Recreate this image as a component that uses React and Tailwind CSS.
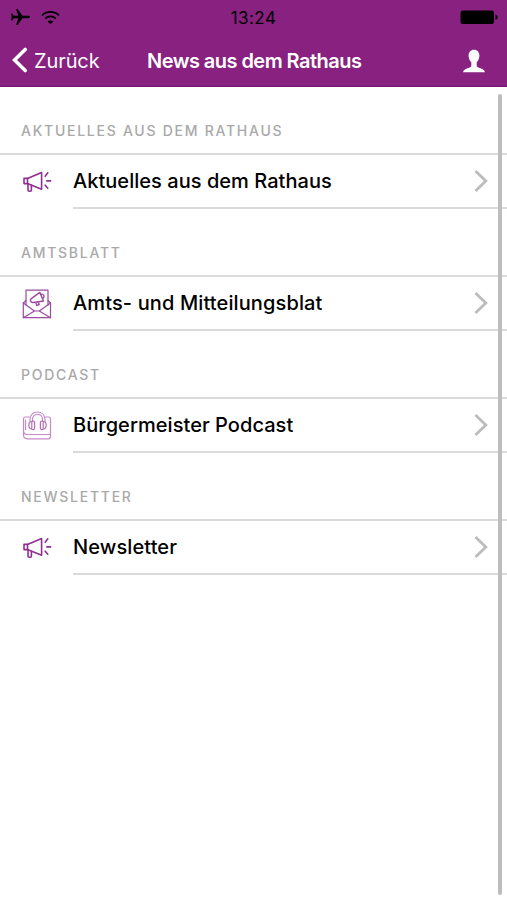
import React from "react";

function Megaphone() {
  return (
    <svg className="mb-[2px] h-[30px] w-[30px]" viewBox="0 0 30 30" fill="none" stroke="#8d3090" strokeWidth="1.6" strokeLinejoin="round" strokeLinecap="round">
      <path d="M2 12.400h3.500v5.200H2z" />
      <path d="M5.500 12.400 19.600 6.600v16.600L5.500 17.600" />
      <path d="M6 17.700v6.300c0 .8.500 1.200 1.200 1.200h1c.8 0 1.200-.4 1.200-1.200v-4.800" />
      <path d="M23.200 10.300l2.600-3.500M24.800 14.900h3.800M23.200 19.200l2.600 3" />
    </svg>
  );
}

function Envelope() {
  return (
    <svg className="h-[30px] w-[30px]" viewBox="0 0 30 30" fill="none" stroke="#9b4a9f" strokeWidth="1.2" strokeLinejoin="round" strokeLinecap="round">
      <path d="M4 16V1.200h22V16" />
      <path d="M4 11.500 1.300 14v14.700h27.200V14L26 11.500" />
      <path d="M1.300 14l11.200 8h4.800l11.200-8M1.300 28.700l11.200-6.700M28.500 28.700 17.300 22" />
      <path strokeWidth="1.400" d="M9.300 9.600 17.800 3.400 21.500 12l-10.200 1.500c-2.600.3-4-2.500-2-3.900zM13.800 13.500l1 3 2.400-.8-.8-2.600M19.500 5.200c2.300-.3 3.400 2.200 1.600 4" />
    </svg>
  );
}

function Podcast() {
  return (
    <svg className="h-[30px] w-[30px]" viewBox="0 0 30 30" fill="none" stroke="#c58bc9" strokeWidth="1.200" strokeLinejoin="round" strokeLinecap="round">
      <path d="M7.500 6H3.500c-1.400 0-2 .8-2 2v15.800c0 2.500 1.500 4 4 4h20.800c1.500 0 2.200-.8 2.200-2.200V8c0-1.200-.7-2-2-2H23.500" />
      <path d="M1.500 20.500c.3 2 1.500 3 3.500 3h23.500M3.500 9v9.500" />
      <path d="M8 10.500V8.500C8 4 11 1 15.500 1S23 4 23 8.500v2M10.500 10.500v-2c0-3 2-5 5-5s5 2 5 5v2" />
      <path stroke="#b56bb9" d="M9.800 10.500C5.800 10.500 5.800 18.200 9.800 18M9.800 10.300c1.800-.8 2.800 0 2.800 1.500v4.900c0 1.700-1.300 2.400-2.800 1.500zM21.200 10.500c4 0 4 7.700 0 7.500M21.200 10.300c-1.800-.8-2.800 0-2.800 1.500v4.900c0 1.700 1.300 2.400 2.800 1.500z" />
    </svg>
  );
}

const sections = [
  { heading: "AKTUELLES AUS DEM RATHAUS", label: "Aktuelles aus dem Rathaus", Icon: Megaphone, labelClass: "tracking-[0.04px]" },
  { heading: "AMTSBLATT", label: "Amts- und Mitteilungsblat", Icon: Envelope, labelClass: "tracking-[0.12px]" },
  { heading: "PODCAST", label: "Bürgermeister Podcast", Icon: Podcast, labelClass: "tracking-[0.05px]" },
  { heading: "NEWSLETTER", label: "Newsletter", Icon: Megaphone, labelClass: "tracking-[0.1px]" },
];

function Section({ heading, label, Icon, labelClass }) {
  return (
    <section className="h-[122px]">
      <h2 className="flex h-[68px] items-center border-b-2 border-[#dadada] pt-[22px] pl-[21px] text-[14px] leading-5 font-medium tracking-[1.74px] whitespace-nowrap text-[#a9a9a9]">
        {heading}
      </h2>
      <div className="flex h-[54px] items-stretch pl-[22px]">
        <div className="flex w-[51px] items-center">
          <Icon />
        </div>
        <div className="flex flex-1 items-center justify-between border-b-2 border-[#dadada] pr-[19px]">
          <span className={`text-[20px] leading-6 font-medium whitespace-nowrap text-black ${labelClass}`}>{label}</span>
          <svg className="h-6 w-[14px]" viewBox="0 0 14 24" fill="none" stroke="#bcbcbc" strokeWidth="2.800">
            <path d="M1.500 2 11.800 12 1.500 22" />
          </svg>
        </div>
      </div>
    </section>
  );
}

export default function App() {
  return (
    <div className="relative h-[900px] w-[507px] overflow-hidden bg-white font-['Inter','Liberation_Sans',sans-serif]">
      <header className="h-[87px] border-b border-[#74146e] bg-[#88217f] text-white">
        <div className="grid h-[35px] grid-cols-3 items-center pr-[8px] pl-[10px] text-black">
          <div className="mb-px flex items-center gap-[11px]">
            <svg className="h-[18px] w-5" viewBox="0 0 20 18" fill="currentColor">
              <path d="M20 9c0-.8-1-1.200-2.500-1.200h-5L7.500 1H6l2.400 6.800H4L2.200 5.500H1L1.700 9 1 12.500h1.200L4 10.200h4.400L6 17h1.500l5-6.800h5C19 10.200 20 9.800 20 9z" />
            </svg>
            <svg className="h-[15px] w-[19px]" viewBox="0 0 19 15" fill="none" stroke="currentColor" strokeWidth="1.700">
              <path d="M1 5.300c4.700-4.600 12.300-4.600 17 0M4.200 8.600c3-2.900 7.600-2.900 10.600 0" />
              <path d="M9.500 14.300 6.700 11.500c1.600-1.500 4-1.500 5.600 0z" fill="currentColor" stroke="none" />
            </svg>
          </div>
          <span className="pr-[2px] text-center text-[17px] leading-6 tracking-[0.450px]">13:24</span>
          <svg className="mb-px h-[14px] w-[39px] justify-self-end" viewBox="0 0 39 14" fill="currentColor">
            <rect x="0.500" y="0.500" width="33.500" height="13.500" rx="2.500" />
            <path d="M35.500 4.700c3 .5 3 4.500 0 5z" />
          </svg>
        </div>
        <div className="flex h-[52px] items-center pl-3">
          <svg className="mb-[2px] h-[26px] w-[16px]" viewBox="0 0 16 26" fill="none" stroke="currentColor" strokeWidth="3.600" strokeLinecap="round">
            <path d="M13.200 2.500 2.500 13l10.700 10.500" />
          </svg>
          <span className="ml-[6px] w-[113px] text-[20px] leading-6 tracking-[-0.1px] whitespace-nowrap">Zurück</span>
          <h1 className="flex-1 text-[20px] leading-6 font-semibold tracking-[-0.540px] whitespace-nowrap">News aus dem Rathaus</h1>
          <svg className="mr-[22px] h-[24px] w-[22px]" viewBox="0 0 22 24" fill="currentColor">
            <path d="M11 .7C7.700.7 5.600 2.900 5.600 6.500c0 2.800 1 5.200 2.700 6.700v3.500c0 1.200-1 1.700-3 2.300C2.200 20 .5 21 0 23.300h22c-.5-2.300-2.200-3.300-5.300-4.300-2-.6-3-1.100-3-2.300v-3.500c1.700-1.500 2.700-3.900 2.700-6.700C16.400 2.900 14.300.7 11 .7z" />
          </svg>
        </div>
      </header>
      <main>
        {sections.map((section) => (
          <Section key={section.heading} {...section} />
        ))}
      </main>
      <div className="absolute top-[94px] right-[5px] h-[801px] w-[4px] rounded-full bg-[#bdbdbd]" />
    </div>
  );
}
